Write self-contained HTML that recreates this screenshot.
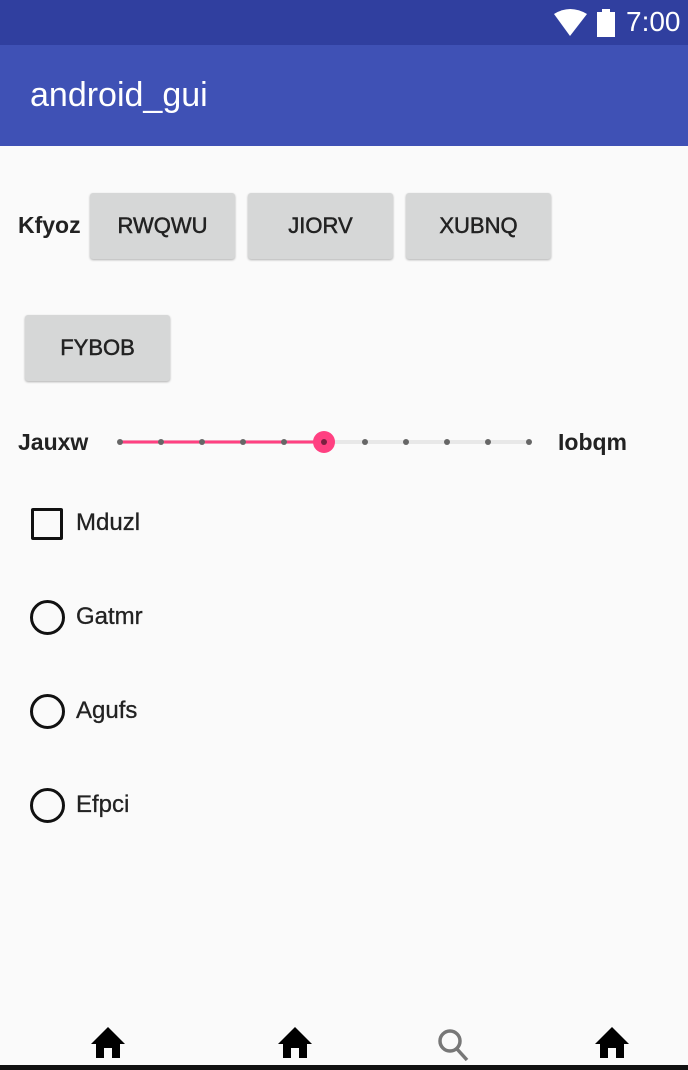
<!DOCTYPE html>
<html><head><style>
*{margin:0;padding:0;box-sizing:border-box}
body{width:688px;height:1070px;background:#fafafa;position:relative;overflow:hidden;font-family:"Liberation Sans",sans-serif;color:#222}
.a{position:absolute}
.btn{position:absolute;background:#d6d7d7;border-radius:3px;box-shadow:0 1px 2px rgba(0,0,0,.3);font-size:22px;color:#222;display:flex;align-items:center;justify-content:center;width:145px;height:66px;-webkit-text-stroke:0.5px #222}
.lbl{position:absolute;font-size:23px;font-weight:bold;color:#222}
.t{position:absolute;font-size:24px;color:#222;left:76px;-webkit-text-stroke:0.3px #222}
.r{position:absolute;left:30px;width:35px;height:35px;border:3px solid #111;border-radius:50%}
</style></head><body>
<div class="a" style="left:0;top:0;width:688px;height:45px;background:#303f9f"></div>
<svg class="a" style="left:553px;top:8px" width="70" height="30">
<path d="M1 6 Q17 -4 34 6 L17 28 Z" fill="#fff"/>
<rect x="44" y="4" width="18" height="25" fill="#fff"/><rect x="49" y="1" width="8" height="4" fill="#fff"/></svg>
<div class="a" style="left:626px;top:6px;color:#fff;font-size:28px">7:00</div>
<div class="a" style="left:0;top:45px;width:688px;height:101px;background:#3f51b5"></div>
<div class="a" style="left:30px;top:76px;color:#fff;font-size:34px">android_gui</div>
<div class="lbl" style="left:18px;top:212px">Kfyoz</div>
<div class="btn" style="left:90px;top:193px">RWQWU</div>
<div class="btn" style="left:248px;top:193px">JIORV</div>
<div class="btn" style="left:406px;top:193px">XUBNQ</div>
<div class="btn" style="left:25px;top:315px">FYBOB</div>
<div class="lbl" style="left:18px;top:429px">Jauxw</div>
<div class="lbl" style="left:558px;top:429px">Iobqm</div>
<svg class="a" style="left:0;top:420px" width="688" height="44">
<line x1="120" y1="22" x2="529" y2="22" stroke="#e8e8e8" stroke-width="4"/>
<line x1="120" y1="22" x2="324" y2="22" stroke="#ff4081" stroke-width="3"/>
<g fill="#666"><circle cx="120" cy="22" r="3"/><circle cx="161" cy="22" r="3"/><circle cx="202" cy="22" r="3"/><circle cx="243" cy="22" r="3"/><circle cx="284" cy="22" r="3"/><circle cx="365" cy="22" r="3"/><circle cx="406" cy="22" r="3"/><circle cx="447" cy="22" r="3"/><circle cx="488" cy="22" r="3"/><circle cx="529" cy="22" r="3"/></g>
<circle cx="324" cy="22" r="11" fill="#ff4081"/><circle cx="324" cy="22" r="3" fill="#7a2040"/>
</svg>
<div class="a" style="left:31px;top:508px;width:32px;height:32px;border:3px solid #111;border-radius:2px"></div>
<div class="t" style="top:509px">Mduzl</div>
<div class="r" style="top:600px"></div><div class="t" style="top:603px">Gatmr</div>
<div class="r" style="top:694px"></div><div class="t" style="top:697px">Agufs</div>
<div class="r" style="top:788px"></div><div class="t" style="top:791px">Efpci</div>
<svg class="a" style="left:0;top:1020px" width="688" height="50">
<g fill="#000">
<path d="M108 7 L91 24 L96 24 L96 38 L104 38 L104 28 L112 28 L112 38 L120 38 L120 24 L125 24 Z"/>
<path d="M295 7 L278 24 L283 24 L283 38 L291 38 L291 28 L299 28 L299 38 L307 38 L307 24 L312 24 Z"/>
<path d="M612 7 L595 24 L600 24 L600 38 L608 38 L608 28 L616 28 L616 38 L624 38 L624 24 L629 24 Z"/>
</g>
<circle cx="450" cy="21" r="10" fill="none" stroke="#777" stroke-width="3.5"/>
<line x1="457" y1="29" x2="467" y2="40" stroke="#777" stroke-width="3.5"/>
<rect x="0" y="45" width="688" height="5" fill="#111"/>
</svg>
</body></html>
